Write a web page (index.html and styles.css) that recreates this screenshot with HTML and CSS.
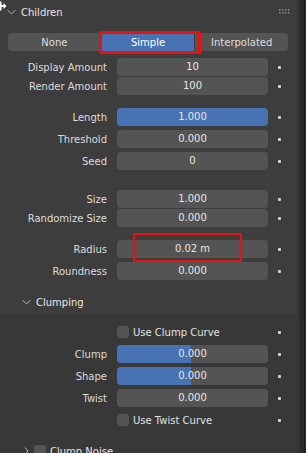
FILE: index.html
```html
<!DOCTYPE html>
<html lang="en">
<head>
    <meta charset="UTF-8">
    <title>Children</title>
    <link rel="stylesheet" href="styles.css">
</head>
<body>
    <div class="app">
        <div class="panel">
            <!-- kursor mouse di pojok -->
            <svg class="cursor" width="7" height="12" viewBox="0 0 7 12">
                <path d="M0 1.5 L1.5 1.5 L1.5 5 L3.5 5 L3.5 3 L6.5 6 L3.5 9 L3.5 7 L1.5 7 L1.5 10.5 L0 10.5 Z" fill="#fff"/>
            </svg>

            <!-- header panel -->
            <div class="panel-head">
                <svg class="chev" width="9" height="6" viewBox="0 0 9 6">
                    <path d="M0.5 1 L4.5 5 L8.5 1" fill="none" stroke="#b5b5b5" stroke-width="1"/>
                </svg>
                <span>Children</span>
                <svg class="grip" width="11" height="5" viewBox="0 0 11 5">
                    <rect x="0" y="0" width="1.5" height="1.5" fill="#8a8a8a"/>
                    <rect x="3" y="0" width="1.5" height="1.5" fill="#8a8a8a"/>
                    <rect x="6" y="0" width="1.5" height="1.5" fill="#8a8a8a"/>
                    <rect x="9" y="0" width="1.5" height="1.5" fill="#8a8a8a"/>
                    <rect x="0" y="3" width="1.5" height="1.5" fill="#8a8a8a"/>
                    <rect x="3" y="3" width="1.5" height="1.5" fill="#8a8a8a"/>
                    <rect x="6" y="3" width="1.5" height="1.5" fill="#8a8a8a"/>
                    <rect x="9" y="3" width="1.5" height="1.5" fill="#8a8a8a"/>
                </svg>
            </div>

            <!-- pilihan mode -->
            <div class="segment">
                <div class="seg">None</div>
                <div class="seg seg-on marked">Simple</div>
                <div class="seg">Interpolated</div>
            </div>

            <div class="row mt-7">
                <div class="label">Display Amount</div>
                <div class="field">10</div>
                <div class="dot"></div>
            </div>
            <div class="row mt-1">
                <div class="label">Render Amount</div>
                <div class="field">100</div>
                <div class="dot"></div>
            </div>

            <div class="row mt-13">
                <div class="label">Length</div>
                <div class="field field-blue">1.000</div>
                <div class="dot"></div>
            </div>
            <div class="row mt-4">
                <div class="label">Threshold</div>
                <div class="field">0.000</div>
                <div class="dot"></div>
            </div>
            <div class="row mt-4">
                <div class="label">Seed</div>
                <div class="field">0</div>
                <div class="dot"></div>
            </div>

            <div class="row mt-20">
                <div class="label">Size</div>
                <div class="field">1.000</div>
                <div class="dot"></div>
            </div>
            <div class="row mt-1">
                <div class="label">Randomize Size</div>
                <div class="field">0.000</div>
                <div class="dot"></div>
            </div>

            <div class="row mt-13">
                <div class="label">Radius</div>
                <div class="field marked-radius">0.02 m</div>
                <div class="dot"></div>
            </div>
            <div class="row mt-4">
                <div class="label">Roundness</div>
                <div class="field">0.000</div>
                <div class="dot"></div>
            </div>

            <!-- sub panel Clumping -->
            <div class="sub-head">
                <svg class="chev" width="9" height="6" viewBox="0 0 9 6">
                    <path d="M0.5 1 L4.5 5 L8.5 1" fill="none" stroke="#b5b5b5" stroke-width="1"/>
                </svg>
                <span>Clumping</span>
            </div>

            <div class="sub-body">
                <div class="row">
                    <div class="label"></div>
                    <div class="check-wrap"><span class="check"></span>Use Clump Curve</div>
                    <div class="dot"></div>
                </div>
                <div class="row mt-4">
                    <div class="label">Clump</div>
                    <div class="field slider"><span class="fill" style="width: 49%"></span><span class="val">0.000</span></div>
                    <div class="dot"></div>
                </div>
                <div class="row mt-4">
                    <div class="label">Shape</div>
                    <div class="field slider"><span class="fill" style="width: 49%"></span><span class="val">0.000</span></div>
                    <div class="dot"></div>
                </div>
                <div class="row mt-4">
                    <div class="label">Twist</div>
                    <div class="field">0.000</div>
                    <div class="dot"></div>
                </div>
                <div class="row mt-4">
                    <div class="label"></div>
                    <div class="check-wrap"><span class="check"></span>Use Twist Curve</div>
                    <div class="dot"></div>
                </div>

                <div class="noise-head">
                    <svg class="chev-r" width="5" height="8" viewBox="0 0 5 8">
                        <path d="M1 0.5 L4 4 L1 7.5" fill="none" stroke="#b5b5b5" stroke-width="1"/>
                    </svg>
                    <span class="check"></span>
                    <span>Clump Noise</span>
                </div>
            </div>
        </div>
        <div class="edge"></div>
    </div>
</body>
</html>
```

FILE: styles.css
```css
/* dasar halaman */
body {
    margin: 0;
    background: #3d3d3d;
    font-family: "DejaVu Sans", sans-serif;
    font-size: 10px;
    color: #e2e2e2;
    overflow: hidden;
}

.app {
    display: flex;
    width: 306px;
    height: 453px;
    overflow: hidden;
}

/* panel utama */
.panel {
    position: relative;
    width: 297px;
    background: #3d3d3d;
}

.edge {
    width: 9px;
    background: linear-gradient(to right, #343434 0 3px, #2a2a2a 3px 7px, #1b1b1b 7px 8px, #2c2c2c 8px);
}

.cursor {
    position: absolute;
    left: 0;
    top: 0;
}

.panel-head {
    height: 24px;
    display: flex;
    align-items: center;
    padding-left: 7px;
    color: #e6e6e6;
}

.panel-head .chev {
    margin-right: 5px;
}

.grip {
    margin-left: auto;
    margin-right: 7px;
    margin-top: -1px;
}

/* tombol segmen */
.segment {
    display: flex;
    gap: 1px;
    margin: 9px 9px 0 8px;
    height: 18px;
}

.seg {
    flex: 1;
    display: flex;
    align-items: center;
    justify-content: center;
    background: #545454;
    color: #dedede;
}

.seg:first-child {
    border-radius: 4px 0 0 4px;
}

.seg:last-child {
    border-radius: 0 4px 4px 0;
}

.seg-on {
    background: #4772b3;
    color: #fff;
}

.marked {
    position: relative;
}

.marked::after {
    content: "";
    position: absolute;
    left: -3px;
    right: -7px;
    top: -2px;
    bottom: -3px;
    border: 3px solid #e81010;
}

/* baris properti */
.row {
    display: grid;
    grid-template-columns: 117px 151px 1fr;
    height: 18px;
    align-items: center;
}

.label {
    text-align: right;
    padding-right: 10px;
    color: #dcdcdc;
}

.field {
    height: 18px;
    line-height: 18px;
    background: #545454;
    border-radius: 4px;
    text-align: center;
    color: #e6e6e6;
}

.field-blue {
    background: #4772b3;
}

.marked-radius {
    position: relative;
}

.marked-radius::after {
    content: "";
    position: absolute;
    left: 16px;
    width: 109px;
    top: -7px;
    bottom: -4px;
    box-sizing: border-box;
    border: 2px solid #e81010;
}

.slider {
    position: relative;
    overflow: hidden;
}

.slider .fill {
    position: absolute;
    left: 0;
    top: 0;
    bottom: 0;
    background: #4772b3;
}

.slider .val {
    position: relative;
}

.dot {
    width: 3px;
    height: 3px;
    border-radius: 1px;
    background: #d4d4d4;
    margin-left: 10px;
}

.mt-1 { margin-top: 1px; }
.mt-4 { margin-top: 4px; }
.mt-7 { margin-top: 7px; }
.mt-13 { margin-top: 13px; }
.mt-20 { margin-top: 20px; }

/* checkbox */
.check-wrap {
    display: flex;
    align-items: center;
    color: #e2e2e2;
}

.check {
    display: inline-block;
    width: 12px;
    height: 12px;
    border-radius: 3px;
    background: #545454;
    margin-right: 4px;
}

/* sub panel */
.sub-head {
    margin-top: 11px;
    height: 22px;
    display: flex;
    align-items: center;
    padding-left: 22px;
    color: #e6e6e6;
}

.sub-head .chev {
    margin-right: 5px;
}

.sub-body {
    background: #383838;
    padding-top: 10px;
    height: 200px;
}

.noise-head {
    margin-top: 13px;
    height: 18px;
    display: flex;
    align-items: center;
    padding-left: 24px;
    color: #e6e6e6;
}

.chev-r {
    margin-right: 5px;
}
```
